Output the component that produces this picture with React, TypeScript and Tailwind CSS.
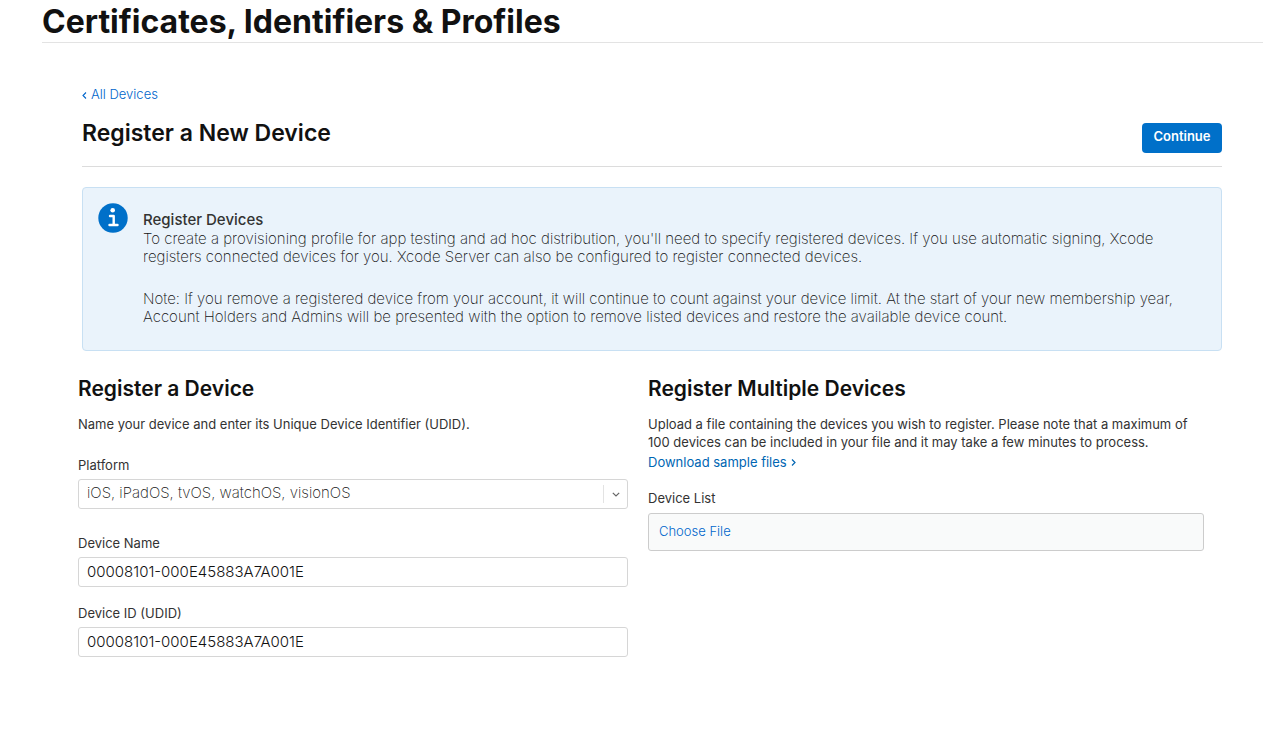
import React, { useState } from 'react';

const platforms = ['iOS, iPadOS, tvOS, watchOS, visionOS', 'macOS'];

const inputClass = 'mt-[5px] block h-[30px] w-full rounded-[3px] border border-[#d6d6d6] bg-white px-2 pb-0.5 text-[15px] text-[#111]';

const App: React.FC = () => {
  const [platform, setPlatform] = useState(platforms[0]);
  const [name, setName] = useState('00008101-000E45883A7A001E');
  const [udid, setUdid] = useState('00008101-000E45883A7A001E');

  return (
    <div className="min-h-screen bg-white pr-4 pl-[42px] font-['Inter',sans-serif] text-[#333]">
      <header className="border-b border-[#e3e3e3]">
        <h1 className="pt-0.5 text-[32px] leading-10 font-bold text-[#111]">Certificates, Identifiers &amp; Profiles</h1>
      </header>

      <main className="pt-[42px] pr-[41px] pl-9">
        <div className="pl-1">
          <a href="#devices" className="flex h-5 items-center gap-1 text-[13px] font-light text-[#0066cc]">
            <svg className="h-[7px] w-[5px]" viewBox="0 0 5 7" fill="none" stroke="currentColor" strokeWidth="1.1">
              <path d="M4 0.500 1 3.500l3 3" />
            </svg>
            All Devices
          </a>
          <div className="flex items-start justify-between border-b border-[#dcdcdc] pt-3 pb-[13px]">
            <h2 className="h-9 text-[23px] leading-8 font-semibold text-[#111]">Register a New Device</h2>
            <button className="mt-1.5 h-[30px] w-20 rounded-[4px] bg-[#0070c9] pb-0.5 text-[13px] font-semibold text-white">Continue</button>
          </div>

          <section className="mt-5 flex gap-[15px] rounded-[4px] border border-[#c8e0f3] bg-[#eaf3fb] px-[15px] pt-[15px] pb-6">
            <svg className="h-[30px] w-[30px] shrink-0" viewBox="0 0 30 30">
              <circle cx="15" cy="15" r="14.700" fill="#0070c9" />
              <circle cx="14.700" cy="7.300" r="2.300" fill="#fff" />
              <path d="M12 13h3.700v9M11.500 22h8" fill="none" stroke="#fff" strokeWidth="2.400" strokeLinecap="round" strokeLinejoin="round" />
            </svg>
            <div className="pt-2 text-[15px] leading-[18px] font-extralight text-[#111]">
              <h3 className="h-[19px] font-medium text-[#333]">Register Devices</h3>
              <p>To create a provisioning profile for app testing and ad hoc distribution, you'll need to specify registered devices. If you use automatic signing, Xcode registers connected devices for you. Xcode Server can also be configured to register connected devices.</p>
              <p className="mt-6">Note: If you remove a registered device from your account, it will continue to count against your device limit. At the start of your new membership year, Account Holders and Admins will be presented with the option to remove listed devices and restore the available device count.</p>
            </div>
          </section>
        </div>

        <div className="mr-1 grid grid-cols-2 pt-[25px] text-[13px] leading-[18px]">
          <section className="pr-5">
            <h2 className="text-[21px] leading-[26px] font-semibold text-[#111]">Register a Device</h2>
            <p className="mt-[13px]">Name your device and enter its Unique Device Identifier (UDID).</p>
            <label htmlFor="platform" className="mt-[23px] block">Platform</label>
            <div className="relative">
              <select id="platform" value={platform} onChange={(e) => setPlatform(e.target.value)} className={`${inputClass} appearance-none font-extralight`}>
                {platforms.map(item => (
                  <option key={item}>{item}</option>
                ))}
              </select>
              <span className="pointer-events-none absolute right-px bottom-1.5 flex h-[18px] w-6 items-center justify-center border-l border-[#e3e3e3]">
                <svg className="h-[5px] w-2" viewBox="0 0 8 5" fill="none" stroke="#666" strokeWidth="1.2">
                  <path d="m0.800 0.800 3.200 3.200 3.200-3.200" />
                </svg>
              </span>
            </div>
            <label htmlFor="name" className="mt-[25px] block">Device Name</label>
            <input id="name" value={name} onChange={(e) => setName(e.target.value)} className={`${inputClass} font-light`} />
            <label htmlFor="udid" className="mt-[17px] block">Device ID (UDID)</label>
            <input id="udid" value={udid} onChange={(e) => setUdid(e.target.value)} className={`${inputClass} font-light`} />
          </section>

          <section className="pr-3.5">
            <h2 className="text-[21px] leading-[26px] font-semibold text-[#111]">Register Multiple Devices</h2>
            <p className="mt-[13px]">Upload a file containing the devices you wish to register. Please note that a maximum of 100 devices can be included in your file and it may take a few minutes to process.</p>
            <a href="#samples" className="mt-0.5 flex items-center gap-1 text-[#0066b3]">
              Download sample files
              <svg className="h-[7px] w-[5px]" viewBox="0 0 5 7" fill="none" stroke="currentColor" strokeWidth="1.2">
                <path d="m1 0.500 3 3-3 3" />
              </svg>
            </a>
            <label htmlFor="file" className="mt-[18px] block">Device List</label>
            <label htmlFor="file" className="mt-1.5 flex h-[38px] cursor-pointer items-center rounded-[3px] border border-[#ccc] bg-[#f9fafa] px-2.5 pb-0.5 font-light text-[#0066cc]">
              Choose File
              <input id="file" type="file" className="sr-only" />
            </label>
          </section>
        </div>
      </main>
    </div>
  );
};

export default App;
